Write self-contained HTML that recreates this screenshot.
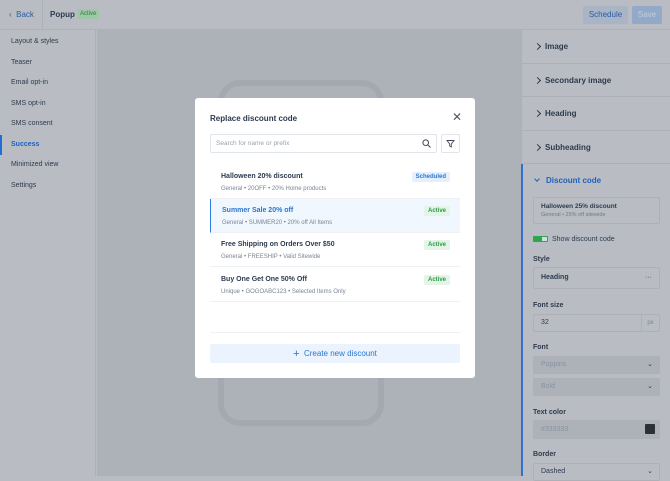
<!DOCTYPE html>
<html><head><style>
*{box-sizing:border-box;margin:0;padding:0}
body{width:670px;height:476px;overflow:hidden;font-family:"Liberation Sans",sans-serif;background:#b9bdc3;position:relative;color:#2c3a50}
.hdr{position:absolute;left:0;top:0;width:670px;height:30px;background:#b9bdc3;border-bottom:1px solid #aeb2b8}
.side{position:absolute;left:0;top:30px;width:96px;height:446px;background:#b9bdc3;border-right:1px solid #adb1b7}
.side div{height:20.5px;font-size:7px;padding-left:11px;line-height:20.5px;color:#2e3a4c}
.canvas{position:absolute;left:97px;top:30px;width:424px;height:446px;background:#adb1b8}
.phone{position:absolute;left:218px;top:80px;width:166px;height:346px;border:6px solid #a4a9b1;border-radius:22px}
.right{position:absolute;left:521px;top:30px;width:149px;height:446px;background:#b9bdc3;border-left:1px solid #adb1b7}
.sec{height:33.5px;border-bottom:1px solid #adb1b7;font-size:8px;font-weight:bold;line-height:33px;padding-left:23px;color:#2e3a4c;position:relative}
.sec:before{content:"";position:absolute;left:13px;top:14px;width:4px;height:4px;border-right:1.2px solid #2e3a4c;border-top:1.2px solid #2e3a4c;transform:rotate(45deg)}
.lbl{position:absolute;left:11px;font-size:7px;font-weight:bold;color:#2e3a4c}
.box{position:absolute;left:11px;width:127px;border:1px solid #adb1b7;border-radius:2px;font-size:7px;padding-left:7px}
.modal{position:absolute;left:195px;top:98px;width:280px;height:280px;background:#fff;border-radius:3px}
.item{position:absolute;left:15px;width:250px;height:34px;border-bottom:1px solid #eef0f3}
.item b{position:absolute;left:11px;top:8px;font-size:7px;color:#2c3a50}
.item span{position:absolute;left:11px;top:21px;font-size:6px;color:#7a8494}
.badge{position:absolute;right:10px;top:7px;font-size:6px;font-weight:bold;padding:2px 4px;border-radius:2px;background:#e3f5e6;color:#2e9a46}
</style></head><body>
<div class="hdr">
<div style="position:absolute;left:9px;top:10px;font-size:8px;color:#2a5da8">‹&nbsp; Back</div>
<div style="position:absolute;left:42px;top:0;width:1px;height:30px;background:#adb1b7"></div>
<div style="position:absolute;left:50px;top:10px;font-size:8px;font-weight:bold">Popup</div>
<div style="position:absolute;left:77px;top:9px;font-size:6px;background:#9fc6a6;color:#2e7d3e;padding:2px 3px;border-radius:2px">Active</div>
<div style="position:absolute;left:583px;top:6px;width:45px;height:18px;background:#a9b4c4;color:#2a5da8;font-size:8px;line-height:18px;text-align:center;border-radius:2px">Schedule</div>
<div style="position:absolute;left:632px;top:6px;width:30px;height:18px;background:#93a9c8;color:#c3cede;font-size:8px;line-height:18px;text-align:center;border-radius:2px">Save</div>
</div>
<div class="side" style="padding-top:2px">
<div>Layout &amp; styles</div><div>Teaser</div><div>Email opt-in</div><div>SMS opt-in</div><div>SMS consent</div>
<div style="color:#1f5fc0;font-weight:bold;border-left:2px solid #1f6fd0;padding-left:9px">Success</div>
<div>Minimized view</div><div>Settings</div>
</div>
<div class="canvas"></div>
<div class="phone"></div>
<div class="right">
<div class="sec">Image</div><div class="sec">Secondary image</div><div class="sec">Heading</div><div class="sec">Subheading</div>
<div style="position:absolute;left:-1px;top:134px;width:2px;height:312px;background:#2f6fd0"></div>
<div style="position:absolute;left:24px;top:146px;font-size:8px;font-weight:bold;color:#2260c0">Discount code</div>
<div style="position:absolute;left:13px;top:147px;width:4px;height:4px;border-right:1.2px solid #2260c0;border-bottom:1.2px solid #2260c0;transform:rotate(45deg)"></div>
<div class="box" style="top:167px;height:27px;"><div style="font-weight:bold;margin-top:5px;font-size:6.5px">Halloween 25% discount</div><div style="font-size:5.5px;color:#6f7786;margin-top:2px">General • 25% off sitewide</div></div>
<div style="position:absolute;left:11px;top:206px;width:15px;height:6px;background:#2ea64a;border-radius:1px"><div style="position:absolute;right:1px;top:1px;width:5px;height:4px;background:#cde"></div></div>
<div style="position:absolute;left:30px;top:206px;font-size:7px">Show discount code</div>
<div class="lbl" style="top:226px">Style</div>
<div class="box" style="top:237px;height:22px;line-height:20px;font-weight:bold">Heading<span style="float:right;margin-right:7px;font-weight:normal">···</span></div>
<div class="lbl" style="top:272px">Font size</div>
<div class="box" style="top:284px;height:18px;line-height:16px">32<span style="position:absolute;right:0;top:0;width:18px;height:16px;border-left:1px solid #adb1b7;color:#7a8494;font-size:6px;text-align:center">px</span></div>
<div class="lbl" style="top:314px">Font</div>
<div class="box" style="top:326px;height:18px;line-height:16px;background:#adb2b9;color:#8a92a0">Poppins<span style="float:right;margin-right:6px;color:#2e3a4c">⌄</span></div>
<div class="box" style="top:348px;height:18px;line-height:16px;background:#adb2b9;color:#8a92a0">Bold<span style="float:right;margin-right:6px;color:#2e3a4c">⌄</span></div>
<div class="lbl" style="top:379px">Text color</div>
<div class="box" style="top:390px;height:19px;line-height:17px;background:#adb2b9;color:#8a92a0">#333333<span style="position:absolute;right:4px;top:3px;width:10px;height:10px;background:#2b3038;border-radius:1px"></span></div>
<div class="lbl" style="top:421px">Border</div>
<div class="box" style="top:433px;height:18px;line-height:16px">Dashed<span style="float:right;margin-right:6px">⌄</span></div>
</div>
<div class="modal">
<div style="position:absolute;left:15px;top:16px;font-size:8px;font-weight:bold">Replace discount code</div>
<div style="position:absolute;left:257px;top:12px;font-size:12px;color:#556">✕</div>
<div style="position:absolute;left:15px;top:36px;width:227px;height:19px;border:1px solid #e1e4e8;border-radius:2px;font-size:6.5px;color:#9aa2ae;line-height:17px;padding-left:5px">Search for name or prefix
<svg style="position:absolute;right:5px;top:4px" width="9" height="9" viewBox="0 0 9 9"><circle cx="3.7" cy="3.7" r="2.8" fill="none" stroke="#445" stroke-width="1"/><path d="M5.8 5.8L8.5 8.5" stroke="#445" stroke-width="1"/></svg></div>
<div style="position:absolute;left:246px;top:36px;width:19px;height:19px;border:1px solid #e1e4e8;border-radius:2px"><svg style="position:absolute;left:4px;top:4px" width="9" height="9" viewBox="0 0 9 9"><path d="M1 1.5H8L5.3 5V8L3.7 7V5Z" fill="none" stroke="#445" stroke-width="0.9"/></svg></div>
<div class="item" style="top:67px"><b>Halloween 20% discount</b><span>General • 20OFF • 20% Home products</span><i class="badge" style="background:#e6f0fc;color:#2a76d2;font-style:normal">Scheduled</i></div>
<div class="item" style="top:101px;background:#f1f7fe;border-left:1.5px solid #2f7de0"><b style="color:#2a76d2">Summer Sale 20% off</b><span>General • SUMMER20 • 20% off All Items</span><i class="badge" style="font-style:normal">Active</i></div>
<div class="item" style="top:135px"><b>Free Shipping on Orders Over $50</b><span>General • FREESHIP • Valid Sitewide</span><i class="badge" style="font-style:normal">Active</i></div>
<div class="item" style="top:170px"><b>Buy One Get One 50% Off</b><span>Unique • GOGOABC123 • Selected Items Only</span><i class="badge" style="font-style:normal">Active</i></div>
<div style="position:absolute;left:15px;top:234px;width:250px;height:1px;background:#eef0f3"></div>
<div style="position:absolute;left:15px;top:246px;width:250px;height:19px;background:#eaf3fe;border-radius:2px;color:#2a76d2;font-size:8px;line-height:19px;text-align:center"><span style="font-size:11px;vertical-align:-1px">+</span>&nbsp; Create new discount</div>
</div>
</body></html>
